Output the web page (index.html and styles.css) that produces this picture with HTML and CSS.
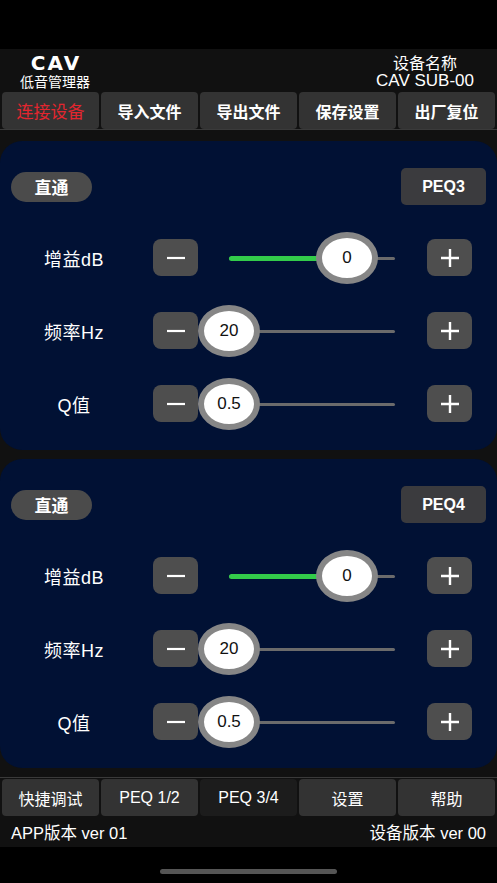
FILE: index.html
```html
<!DOCTYPE html>
<html>
<head>
<meta charset="utf-8">
<title>CAV 低音管理器</title>
<link rel="stylesheet" href="styles.css">
</head>
<body>
<div class="statusbar"></div>
<!-- header with brand and device name -->
<div class="header">
	<div class="brand">
		<div class="brand-name">CAV</div>
		<div class="brand-sub">低音管理器</div>
	</div>
	<div class="device">
		<div class="device-label">设备名称</div>
		<div class="device-name">CAV SUB-00</div>
	</div>
</div>
<div class="toptabs">
	<button class="tab tab-connect">连接设备</button>
	<button class="tab">导入文件</button>
	<button class="tab">导出文件</button>
	<button class="tab">保存设置</button>
	<button class="tab">出厂复位</button>
</div>

<div class="panels">
	<!-- PEQ3 block -->
	<div class="panel">
		<div class="panel-head">
			<button class="pill">直通</button>
			<button class="peq">PEQ3</button>
		</div>
		<div class="row">
			<div class="label">增益dB</div>
			<button class="step"><svg width="18" height="18" viewBox="0 0 18 18"><path d="M0 9h18" stroke="#fff" stroke-width="2.2"/></svg></button>
			<div class="slider">
				<div class="track"></div>
				<div class="fill" style="width: 118px"></div>
				<div class="thumb" style="left: 118px">0</div>
			</div>
			<button class="step"><svg width="18" height="18" viewBox="0 0 18 18"><path d="M0 9h18M9 0v18" stroke="#fff" stroke-width="2.4"/></svg></button>
		</div>
		<div class="row">
			<div class="label">频率Hz</div>
			<button class="step"><svg width="18" height="18" viewBox="0 0 18 18"><path d="M0 9h18" stroke="#fff" stroke-width="2.2"/></svg></button>
			<div class="slider">
				<div class="track"></div>
				<div class="thumb" style="left: 0px">20</div>
			</div>
			<button class="step"><svg width="18" height="18" viewBox="0 0 18 18"><path d="M0 9h18M9 0v18" stroke="#fff" stroke-width="2.4"/></svg></button>
		</div>
		<div class="row">
			<div class="label">Q值</div>
			<button class="step"><svg width="18" height="18" viewBox="0 0 18 18"><path d="M0 9h18" stroke="#fff" stroke-width="2.2"/></svg></button>
			<div class="slider">
				<div class="track"></div>
				<div class="thumb" style="left: 0px">0.5</div>
			</div>
			<button class="step"><svg width="18" height="18" viewBox="0 0 18 18"><path d="M0 9h18M9 0v18" stroke="#fff" stroke-width="2.4"/></svg></button>
		</div>
	</div>
	<!-- PEQ4 block -->
	<div class="panel">
		<div class="panel-head">
			<button class="pill">直通</button>
			<button class="peq">PEQ4</button>
		</div>
		<div class="row">
			<div class="label">增益dB</div>
			<button class="step"><svg width="18" height="18" viewBox="0 0 18 18"><path d="M0 9h18" stroke="#fff" stroke-width="2.2"/></svg></button>
			<div class="slider">
				<div class="track"></div>
				<div class="fill" style="width: 118px"></div>
				<div class="thumb" style="left: 118px">0</div>
			</div>
			<button class="step"><svg width="18" height="18" viewBox="0 0 18 18"><path d="M0 9h18M9 0v18" stroke="#fff" stroke-width="2.4"/></svg></button>
		</div>
		<div class="row">
			<div class="label">频率Hz</div>
			<button class="step"><svg width="18" height="18" viewBox="0 0 18 18"><path d="M0 9h18" stroke="#fff" stroke-width="2.2"/></svg></button>
			<div class="slider">
				<div class="track"></div>
				<div class="thumb" style="left: 0px">20</div>
			</div>
			<button class="step"><svg width="18" height="18" viewBox="0 0 18 18"><path d="M0 9h18M9 0v18" stroke="#fff" stroke-width="2.4"/></svg></button>
		</div>
		<div class="row">
			<div class="label">Q值</div>
			<button class="step"><svg width="18" height="18" viewBox="0 0 18 18"><path d="M0 9h18" stroke="#fff" stroke-width="2.2"/></svg></button>
			<div class="slider">
				<div class="track"></div>
				<div class="thumb" style="left: 0px">0.5</div>
			</div>
			<button class="step"><svg width="18" height="18" viewBox="0 0 18 18"><path d="M0 9h18M9 0v18" stroke="#fff" stroke-width="2.4"/></svg></button>
		</div>
	</div>
</div>

<!-- bottom navigation -->
<div class="bottomtabs">
	<button class="tab btab">快捷调试</button>
	<button class="tab btab">PEQ 1/2</button>
	<button class="tab btab btab-active">PEQ 3/4</button>
	<button class="tab btab">设置</button>
	<button class="tab btab">帮助</button>
</div>
<div class="versions">
	<span>APP版本 ver 01</span>
	<span>设备版本 ver 00</span>
</div>
<div class="homebar">
	<div class="home-indicator"></div>
</div>
</body>
</html>
```

FILE: styles.css
```css
body {
	margin: 0;
	width: 497px;
	height: 883px;
	background-color: #111111;
	color: #ffffff;
	font-family: "Liberation Sans", "Noto Sans CJK SC", sans-serif;
	overflow: hidden;
}
button {
	font-family: inherit;
	color: #ffffff;
	border: none;
	padding: 0;
	margin: 0;
}
.statusbar {
	height: 49px;
	background-color: #000000;
}
.header {
	height: 43px;
	display: flex;
	justify-content: space-between;
	align-items: center;
	padding: 0 23px 0 20px;
}
.brand {
	text-align: center;
	width: 70px;
}
.brand-name {
	font-family: "DejaVu Sans", sans-serif;
	font-size: 20px;
	font-weight: bold;
	letter-spacing: 2px;
	line-height: 22px;
	margin-right: -2px;
}
.brand-sub {
	font-size: 14px;
	line-height: 16px;
}
.device {
	text-align: center;
	line-height: 17px;
	padding-top: 2px;
}
.device-label {
	font-size: 16px;
}
.device-name {
	font-size: 17px;
}
.toptabs,
.bottomtabs {
	display: grid;
	grid-template-columns: repeat(5, 1fr);
	gap: 2px;
	padding: 0 2px;
}
.toptabs {
	height: 37px;
	border-bottom: 1px solid #3a3a3a;
}
.tab {
	background-color: #333333;
	border-radius: 4px;
	font-size: 16px;
	font-weight: bold;
}
.tab-connect {
	color: #e3262f;
	font-weight: normal;
	font-size: 17px;
}
.panels {
	padding: 11px 0 9px 0;
	display: flex;
	flex-direction: column;
	gap: 9px;
	border-bottom: 1px solid #3a3a3a;
}
.panel {
	height: 309px;
	box-sizing: border-box;
	background-color: #011134;
	border-radius: 22px;
	padding: 27px 11px 9px 0;
}
.panel-head {
	height: 37px;
	display: flex;
	justify-content: space-between;
	align-items: center;
	padding-left: 11px;
	margin-bottom: 16px;
}
.pill {
	width: 81px;
	height: 30px;
	border-radius: 15px;
	background-color: #4b4b4b;
	font-size: 17px;
	font-weight: bold;
}
.peq {
	width: 85px;
	height: 37px;
	border-radius: 5px;
	background-color: #3b3b3e;
	font-size: 16px;
	font-weight: bold;
}
.row {
	height: 73px;
	display: flex;
	align-items: center;
}
.label {
	width: 148px;
	text-align: center;
	font-size: 18px;
	letter-spacing: 0.5px;
	margin-right: 5px;
}
.step {
	width: 45px;
	height: 37px;
	border-radius: 8px;
	background-color: #4e4e4e;
	display: flex;
	align-items: center;
	justify-content: center;
}
.slider {
	position: relative;
	width: 229px;
	height: 52px;
}
.track {
	position: absolute;
	left: 31px;
	right: 32px;
	top: 25px;
	height: 3px;
	border-radius: 2px;
	background-color: #6b6b6b;
}
.fill {
	position: absolute;
	left: 31px;
	top: 24px;
	height: 5px;
	border-radius: 3px;
	background-color: #33cc4a;
}
.thumb {
	position: absolute;
	top: 0;
	width: 50px;
	height: 40px;
	border: 6px solid #868686;
	border-radius: 50%;
	background-color: #ffffff;
	color: #111111;
	font-size: 17px;
	display: flex;
	align-items: center;
	justify-content: center;
}
.bottomtabs {
	height: 37px;
	padding-top: 1px;
}
.btab {
	font-weight: normal;
}
.btab-active {
	background-color: #1c1c1c;
}
.versions {
	height: 31px;
	display: flex;
	justify-content: space-between;
	align-items: center;
	padding: 0 11px;
	font-size: 16.5px;
}
.homebar {
	height: 36px;
	background-color: #000000;
	display: flex;
	justify-content: center;
	padding-top: 22px;
	box-sizing: border-box;
}
.home-indicator {
	width: 177px;
	height: 5px;
	border-radius: 3px;
	background-color: #555555;
}
```
